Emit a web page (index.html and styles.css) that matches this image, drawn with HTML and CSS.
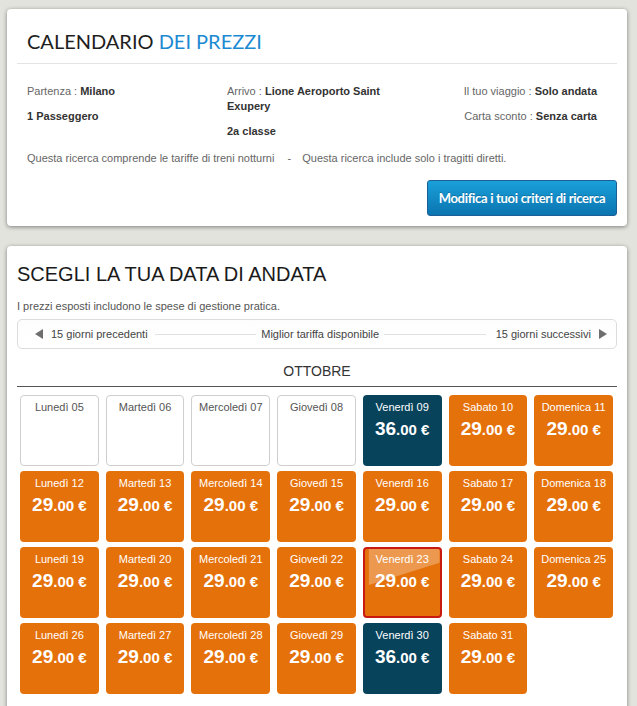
FILE: index.html
```html
<!DOCTYPE html>
<html lang="it">
<head>
<meta charset="utf-8">
<title>Calendario dei prezzi</title>
<link rel="stylesheet" href="styles.css">
</head>
<body>
<div class="page">
  <section class="card search">
    <header class="search-head">
      <h1 class="brand-title">CALENDARIO <span class="accent">DEI PREZZI</span></h1>
    </header>
    <div class="info">
      <div class="col">
        <p class="item"><span class="lbl">Partenza : </span><b>Milano</b></p>
        <p class="item"><b>1 Passeggero</b></p>
      </div>
      <div class="col mid-col">
        <p class="item"><span class="lbl">Arrivo : </span><b>Lione Aeroporto Saint Exupery</b></p>
        <p class="item"><b>2a classe</b></p>
      </div>
      <div class="col right">
        <p class="item"><span class="lbl">Il tuo viaggio : </span><b>Solo andata</b></p>
        <p class="item"><span class="lbl">Carta sconto : </span><b>Senza carta</b></p>
      </div>
    </div>
    <p class="notice">Questa ricerca comprende le tariffe di treni notturni <span class="dash">-</span> Questa ricerca include solo i tragitti diretti.</p>
    <div class="actions">
      <button class="btn">Modifica i tuoi criteri di ricerca</button>
    </div>
  </section>

  <section class="card dates">
    <h2 class="dates-title">SCEGLI LA TUA DATA DI ANDATA</h2>
    <p class="fees">I prezzi esposti includono le spese di gestione pratica.</p>
    <nav class="pager">
      <span class="arrow left"></span>
      <span class="pg-text prev">15 giorni precedenti</span>
      <span class="rule"></span>
      <span class="pg-text mid">Miglior tariffa disponibile</span>
      <span class="rule"></span>
      <span class="pg-text next">15 giorni successivi</span>
      <span class="arrow right"></span>
    </nav>
    <h3 class="month">OTTOBRE</h3>
    <div class="grid">
      <div class="day empty"><span class="dname">Lunedì 05</span></div>
      <div class="day empty"><span class="dname">Martedì 06</span></div>
      <div class="day empty"><span class="dname">Mercoledì 07</span></div>
      <div class="day empty"><span class="dname">Giovedì 08</span></div>
      <div class="day dark"><span class="dname">Venerdì 09</span><span class="price"><span class="int">36</span><span class="dec">.00 €</span></span></div>
      <div class="day"><span class="dname">Sabato 10</span><span class="price"><span class="int">29</span><span class="dec">.00 €</span></span></div>
      <div class="day"><span class="dname">Domenica 11</span><span class="price"><span class="int">29</span><span class="dec">.00 €</span></span></div>

      <div class="day"><span class="dname">Lunedì 12</span><span class="price"><span class="int">29</span><span class="dec">.00 €</span></span></div>
      <div class="day"><span class="dname">Martedì 13</span><span class="price"><span class="int">29</span><span class="dec">.00 €</span></span></div>
      <div class="day"><span class="dname">Mercoledì 14</span><span class="price"><span class="int">29</span><span class="dec">.00 €</span></span></div>
      <div class="day"><span class="dname">Giovedì 15</span><span class="price"><span class="int">29</span><span class="dec">.00 €</span></span></div>
      <div class="day"><span class="dname">Venerdì 16</span><span class="price"><span class="int">29</span><span class="dec">.00 €</span></span></div>
      <div class="day"><span class="dname">Sabato 17</span><span class="price"><span class="int">29</span><span class="dec">.00 €</span></span></div>
      <div class="day"><span class="dname">Domenica 18</span><span class="price"><span class="int">29</span><span class="dec">.00 €</span></span></div>

      <div class="day"><span class="dname">Lunedì 19</span><span class="price"><span class="int">29</span><span class="dec">.00 €</span></span></div>
      <div class="day"><span class="dname">Martedì 20</span><span class="price"><span class="int">29</span><span class="dec">.00 €</span></span></div>
      <div class="day"><span class="dname">Mercoledì 21</span><span class="price"><span class="int">29</span><span class="dec">.00 €</span></span></div>
      <div class="day"><span class="dname">Giovedì 22</span><span class="price"><span class="int">29</span><span class="dec">.00 €</span></span></div>
      <div class="day selected"><span class="dname">Venerdì 23</span><span class="price"><span class="int">29</span><span class="dec">.00 €</span></span></div>
      <div class="day"><span class="dname">Sabato 24</span><span class="price"><span class="int">29</span><span class="dec">.00 €</span></span></div>
      <div class="day"><span class="dname">Domenica 25</span><span class="price"><span class="int">29</span><span class="dec">.00 €</span></span></div>

      <div class="day"><span class="dname">Lunedì 26</span><span class="price"><span class="int">29</span><span class="dec">.00 €</span></span></div>
      <div class="day"><span class="dname">Martedì 27</span><span class="price"><span class="int">29</span><span class="dec">.00 €</span></span></div>
      <div class="day"><span class="dname">Mercoledì 28</span><span class="price"><span class="int">29</span><span class="dec">.00 €</span></span></div>
      <div class="day"><span class="dname">Giovedì 29</span><span class="price"><span class="int">29</span><span class="dec">.00 €</span></span></div>
      <div class="day dark"><span class="dname">Venerdì 30</span><span class="price"><span class="int">36</span><span class="dec">.00 €</span></span></div>
      <div class="day"><span class="dname">Sabato 31</span><span class="price"><span class="int">29</span><span class="dec">.00 €</span></span></div>
    </div>
  </section>
</div>
</body>
</html>
```

FILE: styles.css
```css
* { box-sizing: border-box; }
html, body { margin: 0; padding: 0; }
body {
  background: #e3e3de;
  font-family: "Liberation Sans", Arial, sans-serif;
  font-size: 11px;
  color: #333;
  overflow: hidden;
}
.page {
  padding: 9px 10px 0 7px;
  display: flex;
  flex-direction: column;
  gap: 20px;
}
.card {
  background: #fff;
  border-radius: 4px;
  box-shadow: 0 1px 4px rgba(0,0,0,0.45);
  padding: 10px;
}

/* search summary card */
.search-head {
  height: 45px;
  padding: 0 10px;
  border-bottom: 1px solid #e4e4e4;
  display: flex;
  align-items: center;
}
.brand-title {
  margin: 0;
  font-family: Lato, "Open Sans", sans-serif;
  font-weight: 400;
  font-size: 20px;
  color: #1e1e1e;
}
.accent { color: #1b8ad2; }

.info {
  display: grid;
  grid-template-columns: 200px 200px 1fr;
  margin: 20px 0 0 0;
  padding: 0 20px 0 10px;
}
.col { display: flex; flex-direction: column; gap: 10px; }
.col.mid-col { padding-right: 25px; }
.col.right { text-align: right; }
.item { margin: 0; line-height: 15px; color: #222; }
.item b { font-weight: bold; color: #333; }
.lbl { color: #666; }

.notice {
  margin: 12px 0 0 0;
  padding: 0 10px;
  line-height: 15px;
  color: #666;
}
.dash { margin: 0 8px 0 10px; }

.actions {
  display: flex;
  justify-content: flex-end;
  margin-top: 14px;
}
.btn {
  width: 190px;
  height: 36px;
  border: 1px solid #1b5f99;
  border-radius: 3px;
  background: linear-gradient(#1aa0da, #0b74b0);
  color: #fff;
  font-family: Lato, "Open Sans", sans-serif;
  font-weight: 700;
  font-size: 13px;
  letter-spacing: -0.3px;
  white-space: nowrap;
  padding: 0;
  text-shadow: 0 -1px 0 rgba(0,0,0,0.2);
}

/* dates card */
.dates { padding-bottom: 30px; }
.dates-title {
  margin: 7px 0 0 0;
  font-size: 20px;
  line-height: 23px;
  font-weight: 400;
  color: #1a1a1a;
}
.fees {
  margin: 13px 0 0 0;
  line-height: 14px;
  color: #555;
}
.pager {
  margin-top: 6px;
  height: 30px;
  border: 1px solid #dcdcdc;
  border-radius: 5px;
  background: linear-gradient(#fdfdfd, #fff);
  display: flex;
  align-items: center;
  padding: 0 9px 0 17px;
  color: #444;
}
.arrow {
  width: 0;
  height: 0;
  border-top: 5px solid transparent;
  border-bottom: 5px solid transparent;
}
.arrow.left { border-right: 8px solid #6e6e6e; margin-right: 8px; }
.arrow.right { border-left: 8px solid #6e6e6e; margin-left: 8px; }
.rule { flex: 1; height: 1px; background: #e2e2e2; }
.pg-text { white-space: nowrap; }
.prev { margin-right: 7px; }
.mid { margin: 0 5px; }
.next { margin-left: 10px; }

.month {
  margin: 14px 0 0 0;
  text-align: center;
  font-size: 14px;
  line-height: 16px;
  font-weight: 400;
  color: #333;
  padding-bottom: 7px;
  border-bottom: 1px solid #555;
}

.grid {
  margin: 8px 4px 0 3px;
  display: grid;
  grid-template-columns: repeat(7, 1fr);
  grid-auto-rows: 71px;
  column-gap: 7px;
  row-gap: 5px;
}
.day {
  position: relative;
  border-radius: 4px;
  background: #e5710a;
  color: #fff;
  display: flex;
  flex-direction: column;
  align-items: center;
  padding-top: 6px;
  overflow: hidden;
}
.day.dark { background: #08435c; }
.day.empty {
  background: #fff;
  border: 1px solid #cfcfcf;
  padding-top: 5px;
}
.day.selected {
  border: 2px solid #c81a10;
  padding-top: 4px;
}
.day.selected::before {
  content: "";
  position: absolute;
  left: 0;
  top: 0;
  width: 100%;
  height: 36px;
  background: rgba(255,255,255,0.28);
  clip-path: polygon(6px 0, 100% 0, 100% 38%, 4px 100%, 4px 0);
}
.dname {
  position: relative;
  line-height: 13px;
  font-size: 11px;
}
.day.empty .dname { color: #555; }
.price {
  position: relative;
  margin-top: 4px;
  font-weight: bold;
  line-height: 22px;
  white-space: nowrap;
}
.int { font-size: 19px; }
.dec { font-size: 15px; }
```
